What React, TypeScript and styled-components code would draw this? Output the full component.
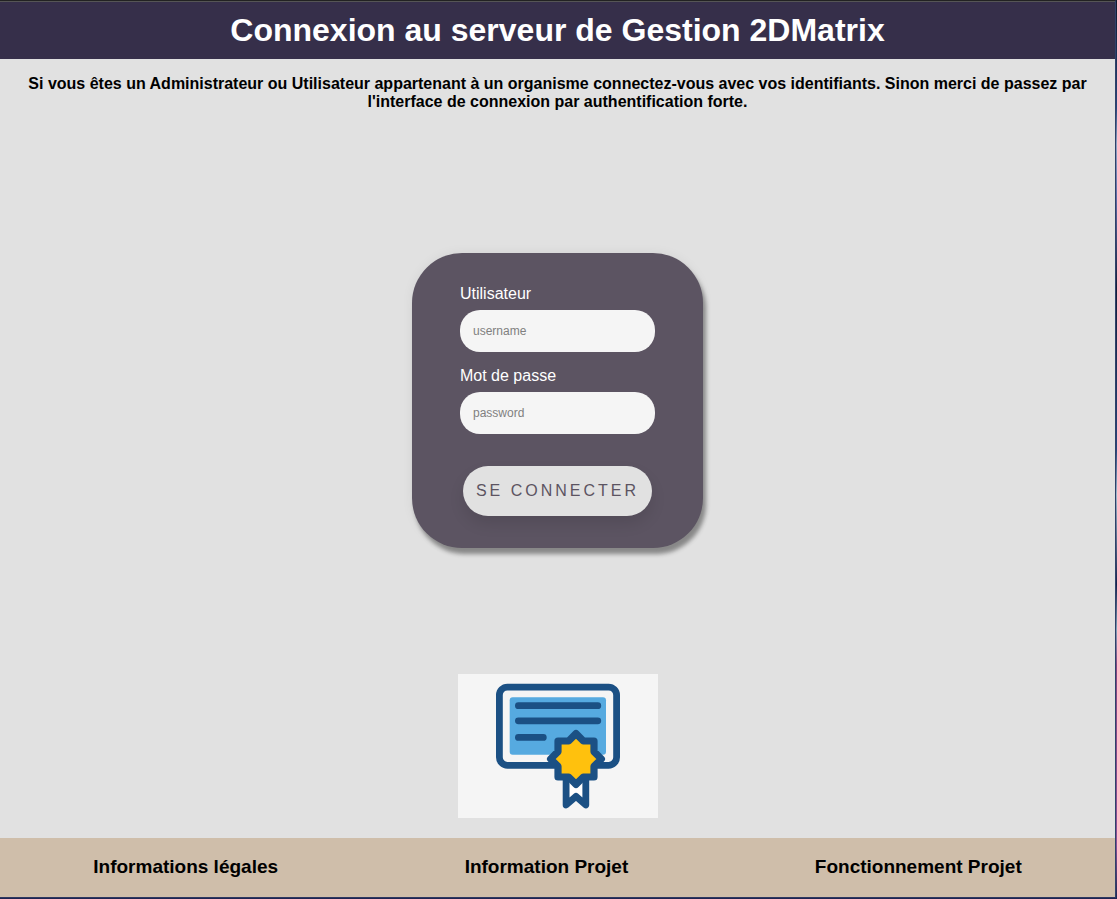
import React from "react";
import styled, { createGlobalStyle } from "styled-components";

const GlobalStyle = createGlobalStyle`
  * {
    box-sizing: border-box;
  }

  body {
    margin: 0;
    font-family: "Liberation Sans", Arial, sans-serif;
    font-size: 16px;
    line-height: 18px;
    color: #000;
  }
`;

const Desktop = styled.div`
  display: flex;
  min-height: 100vh;
  padding: 0 1px 1px 0;
  background: linear-gradient(
    to bottom,
    #10182c 0%,
    #28457c 12%,
    #8fa3c4 16%,
    #5f6ba8 22%,
    #141c38 32%,
    #28457c 50%,
    #9db8cc 55%,
    #16204c 65%,
    #7fa0b8 70%,
    #85457f 74%,
    #8a4f95 94%,
    #1d2450 100%
  );
`;

const Page = styled.div`
  flex: 1;
  display: flex;
  flex-direction: column;
  border-top: 1px solid #222;
  border-right: 1px solid #2f4169;
  border-bottom: 1px solid #2f3860;
  background: #e1e1e1;
`;

const Header = styled.header`
  padding: 10px;
  border-top: 1px solid #555;
  background: #362f4a;
  color: #fff;
  text-align: center;
`;

const Title = styled.h1`
  margin: 0;
  font-size: 32px;
  line-height: 37px;
`;

const Main = styled.main`
  flex: 1;
  display: flex;
  flex-direction: column;
  align-items: center;
  padding-bottom: 20px;
`;

const Notice = styled.p`
  margin: 16px 0;
  font-weight: bold;
  text-align: center;
`;

const LoginForm = styled.form`
  display: flex;
  flex-direction: column;
  align-items: center;
  gap: 15px;
  margin: auto 0;
  padding: 32px 48px;
  border-radius: 50px;
  background: #5c5462;
  box-shadow: 3px 6px 4px #888, 0 0 12px rgba(0, 0, 0, 0.06);
`;

const Field = styled.div`
  display: flex;
  flex-direction: column;
  gap: 7px;
`;

const Label = styled.label`
  color: #fff;
`;

const TextInput = styled.input`
  width: 195px;
  height: 42px;
  padding: 0 13px;
  border: none;
  border-radius: 20px;
  background: #f5f5f5;
  font-family: inherit;
  font-size: 12px;

  &::placeholder {
    color: #808080;
  }
`;

const SubmitButton = styled.button`
  height: 50px;
  margin-top: 17px;
  padding: 0 13px;
  border: none;
  border-radius: 25px;
  background: #e1e1e1;
  box-shadow: 0 8px 15px rgba(0, 0, 0, 0.1);
  color: #5c5462;
  font-family: inherit;
  font-size: 16px;
  letter-spacing: 3px;
  text-transform: uppercase;
  cursor: pointer;
`;

const CertificateLink = styled.a`
  display: block;
  background: #f5f5f5;

  svg {
    display: block;
  }
`;

const Footer = styled.footer`
  display: flex;
  flex-wrap: wrap;
  justify-content: space-around;
  padding: 18px 0 20px;
  background: #cfbeaa;
`;

const FooterLink = styled.a`
  color: #000;
  font-size: 19px;
  font-weight: bold;
  line-height: 21px;
  text-decoration: none;
`;

const CertificateIcon = () => (
  <svg width="200" height="144" viewBox="0 0 200 144" aria-hidden="true">
    <rect x="51.7" y="23.2" width="96.3" height="57.6" rx="3" fill="#56aae0" />
    <g stroke="#1b5084" strokeWidth="6.8" strokeLinecap="round" strokeLinejoin="round">
      <rect x="41.4" y="13.1" width="117.2" height="78.2" rx="8" fill="none" />
      <path d="M60.4 31.7H139.8M60.4 46.8H139.8M60.4 63.4H85.3" fill="none" />
      <path d="M108.1 104V131L118 122.4L127.8 131V104Z" fill="#fff" />
      <path
        d="M118 59.6L125.4 67H136V77.6L143.4 85L136 92.4V103H125.4L118 110.4L110.6 103H100V92.4L92.6 85L100 77.6V67H110.6Z"
        strokeWidth="7.2"
        fill="#ffc10d"
      />
    </g>
  </svg>
);

const footerLinks = ["Informations légales", "Information Projet", "Fonctionnement Projet"];

export default function App() {
  return (
    <>
      <GlobalStyle />
      <Desktop>
        <Page>
          <Header>
            <Title>Connexion au serveur de Gestion 2DMatrix</Title>
          </Header>
          <Main>
            <Notice>
              Si vous êtes un Administrateur ou Utilisateur appartenant à un organisme
              connectez-vous avec vos identifiants. Sinon merci de passez par l'interface de
              connexion par authentification forte.
            </Notice>
            <LoginForm onSubmit={(event) => event.preventDefault()}>
              <Field>
                <Label htmlFor="username">Utilisateur</Label>
                <TextInput id="username" type="text" placeholder="username" />
              </Field>
              <Field>
                <Label htmlFor="password">Mot de passe</Label>
                <TextInput id="password" type="password" placeholder="password" />
              </Field>
              <SubmitButton type="submit">Se connecter</SubmitButton>
            </LoginForm>
            <CertificateLink href="#certificat" aria-label="Authentification forte">
              <CertificateIcon />
            </CertificateLink>
          </Main>
          <Footer>
            {footerLinks.map((label) => (
              <FooterLink key={label} href="#">
                {label}
              </FooterLink>
            ))}
          </Footer>
        </Page>
      </Desktop>
    </>
  );
}
